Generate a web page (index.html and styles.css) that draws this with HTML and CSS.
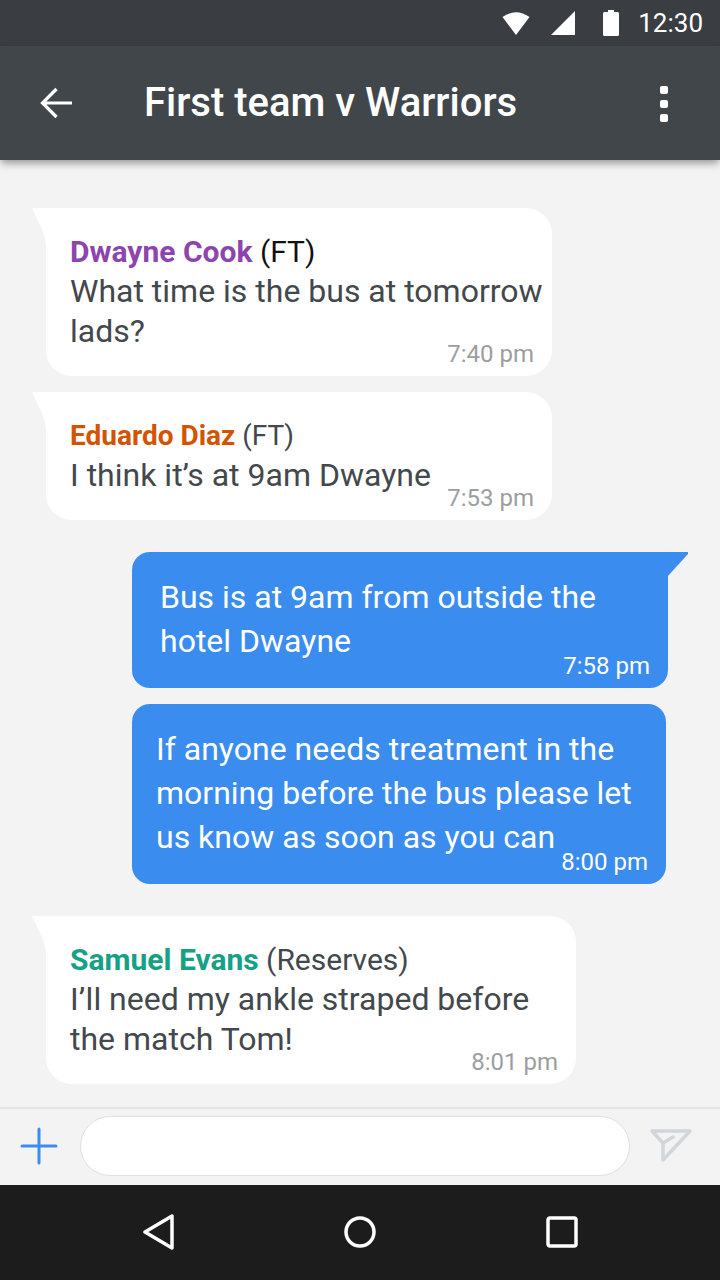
FILE: index.html
```html
<!DOCTYPE html>
<html lang="en">
<head>
    <meta charset="UTF-8">
    <meta name="viewport" content="width=device-width, initial-scale=1.0">
    <title>First team v Warriors</title>
    <link rel="stylesheet" href="styles.css">
</head>
<body>
    <div class="status-bar">
        <svg class="icon-wifi" width="28" height="24" viewBox="0 0 28 24"><path d="M14 24 L0.500 6 Q14 -3.500 27.500 6 Z" fill="#fff"/></svg>
        <svg class="icon-signal" width="24" height="24" viewBox="0 0 24 24"><path d="M24 0 V24 H0 Z" fill="#fff"/></svg>
        <svg class="icon-battery" width="16" height="26" viewBox="0 0 16 26"><path d="M5 0 H11 V2 H14.500 Q16 2 16 3.500 V24.500 Q16 26 14.500 26 H1.500 Q0 26 0 24.500 V3.500 Q0 2 1.500 2 H5 Z" fill="#fff"/></svg>
        <span class="clock">12:30</span>
    </div>

    <header class="toolbar">
        <svg class="icon-back" width="33" height="33" viewBox="0 0 33 33"><path d="M33 16 H4 M17.500 2 L3.500 16 L17.500 30" fill="none" stroke="#fff" stroke-width="3.200"/></svg>
        <h1>First team v Warriors</h1>
        <div class="more"><i></i><i></i><i></i></div>
    </header>

    <main class="messages">
        <div class="bubble in">
            <div class="sender"><b class="purple">Dwayne Cook</b> <span class="dark">(FT)</span></div>
            What time is the bus at tomorrow<br>lads?
            <span class="time">7:40 pm</span>
        </div>
        <div class="bubble in second">
            <div class="sender small"><b class="orange">Eduardo Diaz</b> (FT)</div>
            I think it’s at 9am Dwayne
            <span class="time">7:53 pm</span>
        </div>
        <div class="bubble out first-out">
            Bus is at 9am from outside the<br>hotel Dwayne
            <span class="time">7:58 pm</span>
        </div>
        <div class="bubble out second-out">
            If anyone needs treatment in the<br>morning before the bus please let<br>us know as soon as you can
            <span class="time">8:00 pm</span>
        </div>
        <div class="bubble in third">
            <div class="sender"><b class="green">Samuel Evans</b> (Reserves)</div>
            I’ll need my ankle straped before<br>the match Tom!
            <span class="time">8:01 pm</span>
        </div>
    </main>

    <div class="composer">
        <svg class="icon-plus" width="38" height="38" viewBox="0 0 38 38"><path d="M19 2 V36 M2 19 H36" stroke="#3d8df0" stroke-width="3" stroke-linecap="round"/></svg>
        <div class="input"></div>
        <svg class="icon-send" width="44" height="34" viewBox="0 0 44 34"><path d="M2 2 H40 L13 31 V14 L23 8 M13 14 L2 2" fill="none" stroke="#d1d6dc" stroke-width="3.500" stroke-linejoin="round" stroke-linecap="round"/></svg>
    </div>

    <nav class="nav-bar">
        <svg width="32" height="36" viewBox="0 0 32 36"><path d="M30 2 V34 L3 18 Z" fill="none" stroke="#fff" stroke-width="3.500" stroke-linejoin="round"/></svg>
        <svg width="32" height="32" viewBox="0 0 32 32"><circle cx="16" cy="16" r="14" fill="none" stroke="#fff" stroke-width="3.500"/></svg>
        <svg width="32" height="32" viewBox="0 0 32 32"><rect x="2" y="2" width="28" height="28" rx="2" fill="none" stroke="#fff" stroke-width="3.500"/></svg>
    </nav>
</body>
</html>
```

FILE: styles.css
```css
* {
    box-sizing: border-box;
}
body {
    margin: 0;
    width: 720px;
    height: 1280px;
    display: flex;
    flex-direction: column;
    font-family: Roboto, sans-serif;
    background: #f3f3f3;
    overflow: hidden;
}
.status-bar {
    height: 46px;
    background: #3a3d42;
    display: flex;
    align-items: center;
    justify-content: flex-end;
    padding-right: 17px;
    color: #fff;
}
.icon-wifi {
    margin-right: 21px;
}
.icon-signal {
    margin-right: 28px;
}
.icon-battery {
    margin-right: 19px;
}
.clock {
    font-size: 26px;
}
.toolbar {
    height: 114px;
    background: #41464b;
    display: flex;
    align-items: center;
    padding: 0 52px 0 39px;
    color: #fff;
    box-shadow: 0 4px 8px -1px rgba(0, 0, 0, 0.4);
    position: relative;
}
.toolbar h1 {
    flex: 1;
    margin: 0 0 2px 72px;
    font-size: 40px;
    font-weight: 500;
}
.more {
    display: flex;
    flex-direction: column;
    gap: 6px;
    margin-top: 2px;
}
.more i {
    width: 8px;
    height: 8px;
    border-radius: 2px;
    background: #fff;
}
.messages {
    flex: 1;
    padding-top: 48px;
    display: flex;
    flex-direction: column;
    align-items: flex-start;
}
.bubble {
    position: relative;
    font-size: 32px;
    padding: 24px;
    white-space: nowrap;
}
.in {
    margin-left: 46px;
    width: 506px;
    padding-bottom: 25px;
    background: #fff;
    color: #43484d;
    line-height: 40px;
    border-radius: 0 26px 26px 26px;
}
.in::before {
    content: "";
    position: absolute;
    left: -14px;
    top: 0;
    width: 15px;
    height: 40px;
    background: #fff;
    clip-path: path("M0 1 L1 0 H15 V40 H14 C14 30 12 24 0 1 Z");
}
.second {
    margin-top: 16px;
}
.third {
    margin-top: 32px;
    width: 530px;
}
.sender {
    font-size: 30px;
    margin-bottom: -1px;
}
.small {
    font-size: 28px;
}
.sender b {
    font-weight: 700;
}
.purple {
    color: #8e44ad;
}
.orange {
    color: #d35400;
}
.green {
    color: #16a085;
}
.dark {
    color: #111;
}
.out {
    margin-left: 132px;
    padding-top: 23px;
    padding-bottom: 25px;
    background: #3b8cef;
    color: #fff;
    line-height: 44px;
    border-radius: 18px;
}
.first-out {
    margin-top: 32px;
    width: 536px;
    padding-left: 28px;
    border-top-right-radius: 0;
}
.first-out::after {
    content: "";
    position: absolute;
    right: -20px;
    top: 0;
    width: 21px;
    height: 25px;
    background: #3b8cef;
    clip-path: polygon(0 0, 100% 0, 100% 2px, 0 100%);
}
.second-out {
    margin-top: 16px;
    width: 534px;
}
.time {
    position: absolute;
    right: 18px;
    bottom: 7px;
    font-size: 24px;
    line-height: 30px;
    color: #9b9ea1;
}
.out .time {
    color: #fff;
}
.composer {
    height: 78px;
    margin-top: -1px;
    border-top: 2px solid #e3e3e3;
    display: flex;
    align-items: center;
    padding: 0 26px 2px 20px;
}
.input {
    width: 550px;
    height: 60px;
    margin: 0 20px 0 22px;
    background: #fff;
    border: 1px solid #e0e0e0;
    border-radius: 30px;
}
.nav-bar {
    height: 95px;
    background: #1c1c1c;
    display: flex;
    align-items: center;
    padding: 0 0 2px 142px;
    gap: 170px;
}
```
